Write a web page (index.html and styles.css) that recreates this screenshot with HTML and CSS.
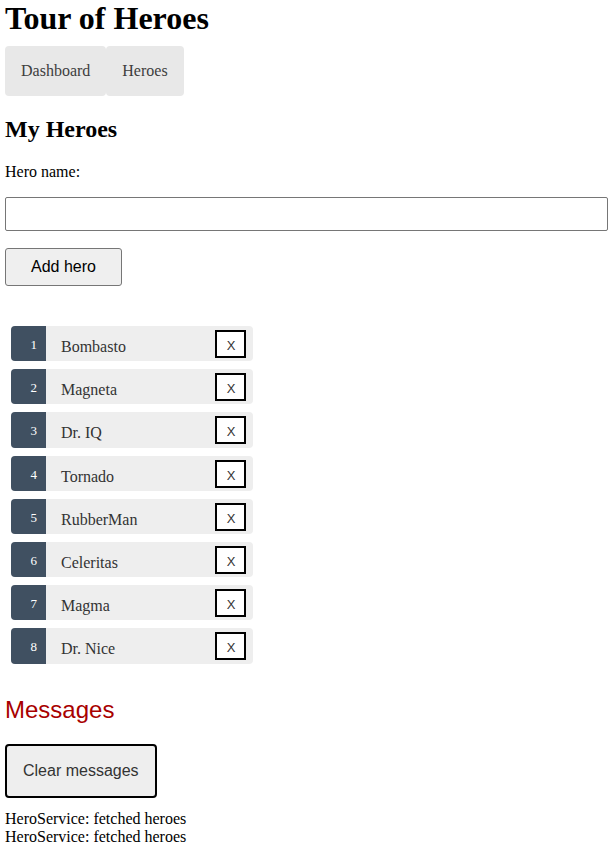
FILE: index.html
```html
<!DOCTYPE html>
<html lang="en">
<head>
<meta charset="utf-8">
<title>Tour of Heroes</title>
<link rel="stylesheet" href="styles.css">
</head>
<body>
<h1 class="app-title">Tour of Heroes</h1>
<nav class="nav">
  <a class="nav-link" href="#">Dashboard</a>
  <a class="nav-link" href="#">Heroes</a>
</nav>

<h2 class="section-title">My Heroes</h2>
<div class="add-form">
  <label class="field-label" for="new-hero">Hero name: </label>
  <input class="field-input" id="new-hero" type="text">
  <button class="add-button" type="button">Add hero</button>
</div>

<ul class="heroes">
  <li class="hero"><a class="hero-link" href="#"><span class="badge">1</span><span class="hero-name">Bombasto</span></a><button class="delete" type="button">X</button></li>
  <li class="hero"><a class="hero-link" href="#"><span class="badge">2</span><span class="hero-name">Magneta</span></a><button class="delete" type="button">X</button></li>
  <li class="hero"><a class="hero-link" href="#"><span class="badge">3</span><span class="hero-name">Dr. IQ</span></a><button class="delete" type="button">X</button></li>
  <li class="hero"><a class="hero-link" href="#"><span class="badge">4</span><span class="hero-name">Tornado</span></a><button class="delete" type="button">X</button></li>
  <li class="hero"><a class="hero-link" href="#"><span class="badge">5</span><span class="hero-name">RubberMan</span></a><button class="delete" type="button">X</button></li>
  <li class="hero"><a class="hero-link" href="#"><span class="badge">6</span><span class="hero-name">Celeritas</span></a><button class="delete" type="button">X</button></li>
  <li class="hero"><a class="hero-link" href="#"><span class="badge">7</span><span class="hero-name">Magma</span></a><button class="delete" type="button">X</button></li>
  <li class="hero"><a class="hero-link" href="#"><span class="badge">8</span><span class="hero-name">Dr. Nice</span></a><button class="delete" type="button">X</button></li>
</ul>

<div class="messages">
  <h2 class="messages-title">Messages</h2>
  <button class="clear" type="button">Clear messages</button>
  <div class="message">HeroService: fetched heroes</div>
  <div class="message">HeroService: fetched heroes</div>
</div>
</body>
</html>
```

FILE: styles.css
```css
html, body {
  background: #ffffff;
}

body {
  margin: 0;
  padding: 0 6px 0 5px;
  font-family: "Liberation Serif", "Times New Roman", serif;
  font-size: 16px;
  color: #000;
}

.app-title {
  margin: 0;
  font-size: 32px;
  line-height: 36px;
  font-weight: bold;
}

.nav {
  display: flex;
  margin-top: 10px;
}

.nav-link {
  display: block;
  padding: 16px;
  line-height: 18px;
  background-color: #e8e8e8;
  color: #3d3d3d;
  text-decoration: none;
  border-radius: 4px;
}

.section-title {
  margin: 19px 0 20px;
  font-size: 24px;
  line-height: 28px;
  font-weight: bold;
}

.add-form {
  margin-bottom: 40px;
}

.field-label {
  display: block;
  line-height: 18px;
}

.field-input {
  display: block;
  box-sizing: border-box;
  width: 100%;
  height: 34px;
  margin: 16px 0 17px;
  padding: 8px;
  border: 1px solid #767676;
  border-radius: 2px;
  font-family: "Liberation Sans", Arial, sans-serif;
  font-size: 13.33px;
  background: #fff;
}

.add-button {
  display: block;
  padding: 9px 25px;
  line-height: 18px;
  font-family: "Liberation Sans", Arial, sans-serif;
  font-size: 16px;
  color: #000;
  background-color: #efefef;
  border: 1px solid #767676;
  border-radius: 3px;
}

.heroes {
  list-style: none;
  margin: 0 0 32px 0;
  padding: 0;
}

.hero {
  display: flex;
  align-items: flex-start;
  box-sizing: border-box;
  width: 242px;
  height: 35.2px;
  margin: 8px 0 8px 6px;
  background-color: #eee;
  border-radius: 4px;
}

.hero-link {
  display: flex;
  align-self: stretch;
  color: #333;
  text-decoration: none;
}

.badge {
  box-sizing: border-box;
  width: 35px;
  padding: 12px 9px 0 0;
  text-align: right;
  font-size: 13px;
  line-height: 13px;
  color: #fff;
  background-color: #405061;
  border-radius: 4px 0 0 4px;
}

.hero-name {
  margin-left: 15px;
  padding-top: 12px;
  line-height: 18px;
}

.delete {
  box-sizing: border-box;
  width: 31px;
  height: 28px;
  margin: 4px 7px 0 auto;
  padding: 7px 0 3px 1px;
  font-family: "Liberation Sans", Arial, sans-serif;
  font-size: 13px;
  line-height: 14px;
  color: #333;
  background-color: #fff;
  border: 2px solid #000;
  border-radius: 0;
}

.messages-title {
  margin: 20px 0;
  font-family: "Liberation Sans", Arial, sans-serif;
  font-size: 24px;
  line-height: 28px;
  font-weight: normal;
  color: #a80000;
}

.clear {
  display: block;
  margin-bottom: 12px;
  padding: 16px;
  line-height: 18px;
  font-family: "Liberation Sans", Arial, sans-serif;
  font-size: 16px;
  color: #333;
  background-color: #eee;
  border: 2px solid #000;
  border-radius: 4px;
}

.message {
  line-height: 18px;
}
```
